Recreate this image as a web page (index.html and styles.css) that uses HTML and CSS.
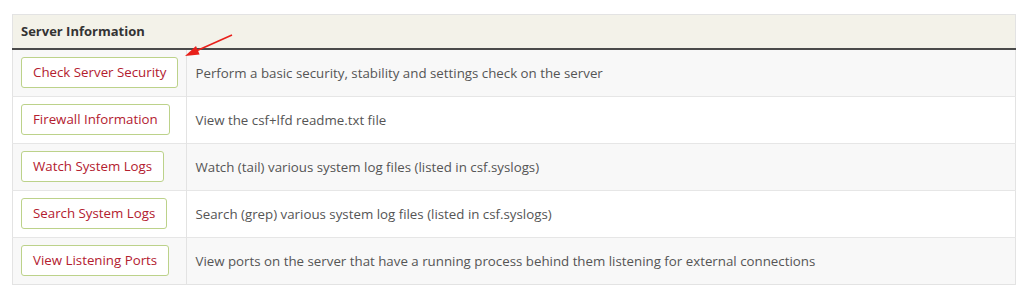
FILE: index.html
```html
<!DOCTYPE html>
<html>
<head>
<meta charset="utf-8">
<link rel="stylesheet" href="styles.css">
<title>Server Information</title>
</head>
<body>
    <div class="panel">
        <table class="infoTable">
            <thead>
                <tr>
                    <th colspan="2">Server Information</th>
                </tr>
            </thead>
            <tbody>
                <tr>
                    <td class="actionCell"><button type="button" class="actionBtn">Check Server Security</button></td>
                    <td>Perform a basic security, stability and settings check on the server</td>
                </tr>
                <tr>
                    <td class="actionCell"><button type="button" class="actionBtn">Firewall Information</button></td>
                    <td>View the csf+lfd readme.txt file</td>
                </tr>
                <tr>
                    <td class="actionCell"><button type="button" class="actionBtn">Watch System Logs</button></td>
                    <td>Watch (tail) various system log files (listed in csf.syslogs)</td>
                </tr>
                <tr>
                    <td class="actionCell"><button type="button" class="actionBtn">Search System Logs</button></td>
                    <td>Search (grep) various system log files (listed in csf.syslogs)</td>
                </tr>
                <tr>
                    <td class="actionCell"><button type="button" class="actionBtn">View Listening Ports</button></td>
                    <td>View ports on the server that have a running process behind them listening for external connections</td>
                </tr>
            </tbody>
        </table>
        <!-- annotation arrow pointing at the first button -->
        <svg class="arrow" width="60" height="30" viewBox="0 0 60 30">
            <line x1="52" y1="3" x2="15" y2="19.5" stroke="#e8201a" stroke-width="1.6"/>
            <polygon points="5,24 16,14 19.6,22.4" fill="#e8201a"/>
        </svg>
    </div>
</body>
</html>
```

FILE: styles.css
```css
body {margin: 0;
      padding: 14px 8px 0 12px;
      background-color: white;
      font-family: "Open Sans", "Liberation Sans", sans-serif;
      font-size: 13.3px;
      color: #555}
.panel {position: relative}
.infoTable {width: 1004px;
            border-collapse: collapse;
            border: 1px solid #e3e3e3}
.infoTable th {background-color: #f3f2e9;
               color: #333;
               font-size: 13px;
               font-weight: bold;
               text-align: left;
               padding: 8px 8px;
               height: 17px;
               line-height: 17px;
               border-bottom: 2px solid #4a4a4a}
.infoTable td {padding: 7px 8px 8px 8px;
               border-top: 1px solid #e6e6e6;
               line-height: 18px;
               vertical-align: middle}
.infoTable tbody tr:nth-child(odd) td {background-color: #f8f8f8}
.infoTable tbody tr:nth-child(even) td {background-color: white}
.actionCell {width: 1%;
             white-space: nowrap;
             border-right: 1px solid #e3e3e3}
.actionBtn {font-family: "Open Sans", "Liberation Sans", sans-serif;
            font-size: 13.3px;
            line-height: 19px;
            height: 31px;
            padding: 5px 11px;
            color: #b3202f;
            background-color: white;
            border: 1px solid #bcd28a;
            border-radius: 3px;
            cursor: pointer}
.arrow {position: absolute;
        left: 168px;
        top: 18px}
```
